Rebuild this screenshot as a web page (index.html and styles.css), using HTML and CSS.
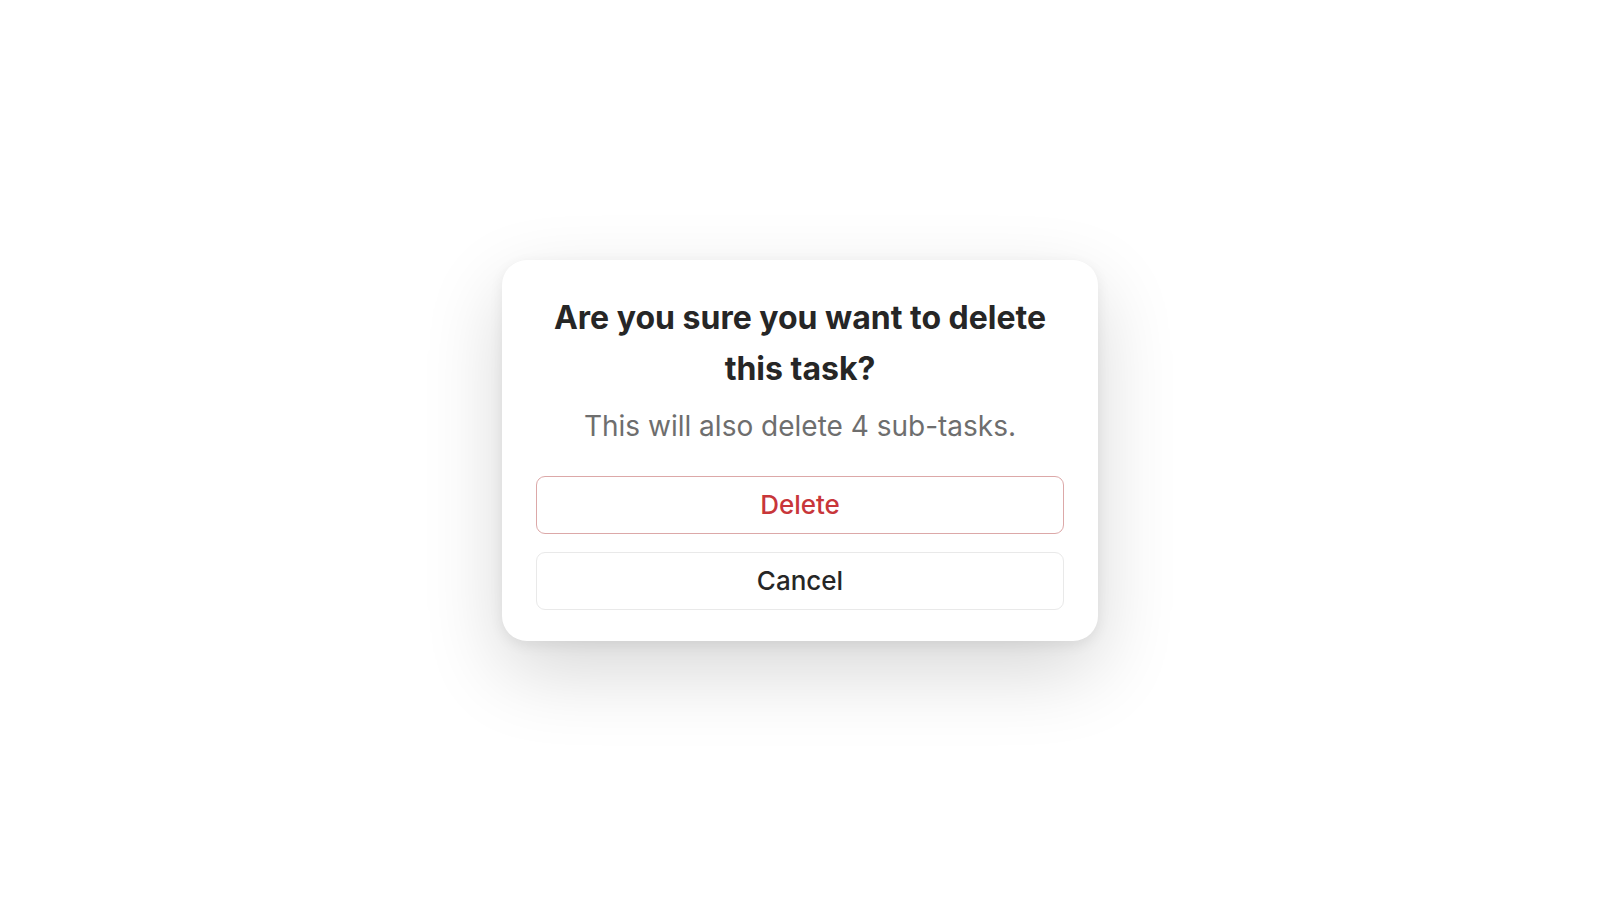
FILE: index.html
```html
<!DOCTYPE html>
<html lang="en">
<head>
    <meta charset="UTF-8">
    <meta name="viewport" content="width=device-width, initial-scale=1.0">
    <title>Delete task</title>
    <link rel="stylesheet" href="styles.css">
</head>
<body>
    <div class="stage">
        <div class="dialog">
            <h1 class="title">Are you sure you want to delete this task?</h1>
            <p class="message">This will also delete 4 sub-tasks.</p>
            <div class="actions">
                <button class="btn btn-delete">Delete</button>
                <button class="btn btn-cancel">Cancel</button>
            </div>
        </div>
    </div>
</body>
</html>
```

FILE: styles.css
```css
html, body {
    margin: 0;
    height: 100%;
    background: #ffffff;
}
body {
    font-family: Inter, "Noto Sans", Arial, sans-serif;
    color: #262626;
}
.stage {
    min-height: 100%;
    display: flex;
    align-items: center;
    justify-content: center;
}
.dialog {
    width: 596px;
    box-sizing: border-box;
    padding: 32px 34px 31px;
    background: #ffffff;
    border-radius: 25px;
    box-shadow: 0 30px 80px rgba(0, 0, 0, 0.16), 0 4px 14px rgba(0, 0, 0, 0.07);
    text-align: center;
}
.title {
    margin: 0 auto;
    max-width: 520px;
    font-size: 32px;
    font-weight: 700;
    line-height: 51px;
    color: #262626;
}
.message {
    margin: 12px 0 30px;
    font-size: 28px;
    line-height: 40px;
    color: #6e6e6e;
}
.actions {
    display: flex;
    flex-direction: column;
    gap: 18px;
}
.btn {
    height: 58px;
    border-radius: 9px;
    background: #ffffff;
    font-family: inherit;
    font-size: 26px;
    font-weight: 500;
    cursor: pointer;
}
.btn-delete {
    border: 1px solid #dca8a8;
    color: #c8363a;
}
.btn-cancel {
    border: 1px solid #e9e9e9;
    color: #262626;
}
```
